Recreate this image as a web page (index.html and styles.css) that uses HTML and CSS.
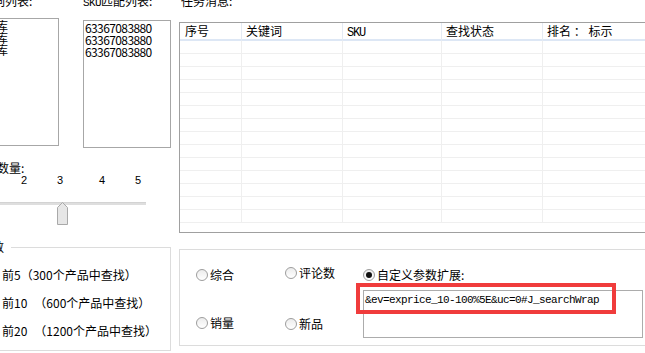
FILE: index.html
```html
<!DOCTYPE html>
<html lang="zh-CN">
<head>
<meta charset="utf-8">
<title>任务消息</title>
<link rel="stylesheet" href="styles.css">
</head>
<body>
<div class="app">
  <div class="left">
    <div class="lists">
      <div class="list-col">
        <div class="title">关键词列表:</div>
        <div class="listbox listbox-kw">
          <div class="item">数据库</div>
          <div class="item">数据库</div>
          <div class="item">数据库</div>
        </div>
      </div>
      <div class="list-col">
        <div class="title"><span class="lat">SKU</span>匹配列表:</div>
        <div class="listbox listbox-sku">
          <div class="item num">63367083880</div>
          <div class="item num">63367083880</div>
          <div class="item num">63367083880</div>
        </div>
      </div>
    </div>
    <div class="count-label">搜索数量:</div>
    <div class="ticks"><span>1</span><span>2</span><span>3</span><span>4</span><span>5</span></div>
    <div class="slider">
      <div class="track"></div>
      <svg class="thumb" width="12" height="23" viewBox="0 0 12 23"><path d="M0.5 22.5 V5.5 L5.5 0.5 L10.5 5.5 V22.5 Z" fill="#e6e6e6" stroke="#a9a9a9"/></svg>
    </div>
    <fieldset class="pages">
      <legend>搜索页数</legend>
      <div class="prow"><span class="radio"></span><span>前5（300个产品中查找）</span></div>
      <div class="prow"><span class="radio"></span><span>前10<span class="sp"></span>（600个产品中查找）</span></div>
      <div class="prow"><span class="radio"></span><span>前20<span class="sp"></span>（1200个产品中查找）</span></div>
    </fieldset>
  </div>
  <div class="right">
    <div class="title task-title">任务消息:</div>
    <div class="table">
      <div class="thead">
        <div class="th">序号</div>
        <div class="th">关键词</div>
        <div class="th"><span class="lat lat-h">SKU</span></div>
        <div class="th">查找状态</div>
        <div class="th">排名 ： 标示</div>
      </div>
      <div class="tbody">
        <div class="tr"><div class="td"></div><div class="td"></div><div class="td"></div><div class="td"></div><div class="td"></div></div>
        <div class="tr"><div class="td"></div><div class="td"></div><div class="td"></div><div class="td"></div><div class="td"></div></div>
        <div class="tr"><div class="td"></div><div class="td"></div><div class="td"></div><div class="td"></div><div class="td"></div></div>
        <div class="tr"><div class="td"></div><div class="td"></div><div class="td"></div><div class="td"></div><div class="td"></div></div>
        <div class="tr"><div class="td"></div><div class="td"></div><div class="td"></div><div class="td"></div><div class="td"></div></div>
        <div class="tr"><div class="td"></div><div class="td"></div><div class="td"></div><div class="td"></div><div class="td"></div></div>
        <div class="tr"><div class="td"></div><div class="td"></div><div class="td"></div><div class="td"></div><div class="td"></div></div>
        <div class="tr"><div class="td"></div><div class="td"></div><div class="td"></div><div class="td"></div><div class="td"></div></div>
        <div class="tr"><div class="td"></div><div class="td"></div><div class="td"></div><div class="td"></div><div class="td"></div></div>
        <div class="tr"><div class="td"></div><div class="td"></div><div class="td"></div><div class="td"></div><div class="td"></div></div>
        <div class="tr"><div class="td"></div><div class="td"></div><div class="td"></div><div class="td"></div><div class="td"></div></div>
        <div class="tr"><div class="td"></div><div class="td"></div><div class="td"></div><div class="td"></div><div class="td"></div></div>
        <div class="tr"><div class="td"></div><div class="td"></div><div class="td"></div><div class="td"></div><div class="td"></div></div>
        <div class="tr"><div class="td"></div><div class="td"></div><div class="td"></div><div class="td"></div><div class="td"></div></div>
      </div>
    </div>
    <div class="options">
      <div class="ocol ocol-1">
        <div class="opt"><span class="radio"></span><span>综合</span></div>
        <div class="opt opt-low1"><span class="radio"></span><span>销量</span></div>
      </div>
      <div class="ocol ocol-2">
        <div class="opt opt-up"><span class="radio"></span><span>评论数</span></div>
        <div class="opt opt-low2"><span class="radio"></span><span>新品</span></div>
      </div>
      <div class="ocol ocol-3">
        <div class="opt"><span class="radio on"></span><span>自定义参数扩展:</span></div>
        <div class="param-wrap">
          <div class="param">&amp;ev=exprice_10-100%5E&amp;uc=0#J_searchWrap</div>
          <div class="highlight"></div>
        </div>
      </div>
    </div>
  </div>
</div>
</body>
</html>
```
FILE: styles.css
```css
* { box-sizing: border-box; }
html, body { margin: 0; padding: 0; }
body {
  width: 645px;
  height: 353px;
  overflow: hidden;
  background: #fff;
  color: #000;
  font-family: "Noto Sans CJK SC", "Noto Sans", sans-serif;
  font-size: 12px;
  line-height: 14px;
}
.app {
  display: flex;
  align-items: flex-start;
  margin-left: -31px;
  width: 720px;
}
.left { width: 202px; flex: none; }
.right { width: 480px; flex: none; margin-left: 8px; }

.title { margin-top: -6px; line-height: 14px; white-space: nowrap; }
.task-title { margin-left: 2px; }
.lat {
  font-family: "Liberation Mono", monospace;
  font-size: 11px;
  letter-spacing: -0.6px;
}
.lat-h {
  font-size: 12px;
  letter-spacing: -1.2px;
}

.lists { display: flex; gap: 24px; }
.list-col { display: flex; flex-direction: column; }
.listbox {
  margin-top: 10px;
  height: 128px;
  border: 1px solid #a7a7a7;
  padding: 1px 1px 0;
  line-height: 12px;
  overflow: hidden;
  white-space: nowrap;
}
.listbox-kw { width: 90px; padding-left: 2px; }
.listbox-sku { width: 88px; }
.num { letter-spacing: -0.6px; }

.count-label { margin-top: 13px; margin-left: 4px; }
.ticks {
  display: grid;
  grid-template-columns: 36px 36px 42px 36px 6px;
  padding-left: 16px;
  font-family: "Liberation Sans", sans-serif;
  font-size: 11px;
  line-height: 11px;
}
.slider { position: relative; margin-top: 16px; height: 22px; }
.track { margin-top: 10px; width: 177px; height: 3px; background: #dedede; border-top: 1px solid #d3d3d3; }
.thumb { position: absolute; left: 88px; top: 0; display: block; }

.pages {
  margin: 16px 0 0 -21px;
  width: 223px;
  height: 111px;
  border: 1px solid #dcdcdc;
  padding: 0 0 0 7px;
  min-width: 0;
}
.pages legend { padding: 0 7px 0 0; line-height: 14px; }
.prow {
  display: flex;
  align-items: center;
  gap: 4px;
  height: 14px;
  margin: 14px 0 0 30px;
  white-space: nowrap;
}
.sp { display: inline-block; width: 7px; }

.radio {
  flex: none;
  position: relative;
  width: 12px;
  height: 12px;
  border: 1px solid #9d9d9d;
  border-radius: 50%;
  background: linear-gradient(#ececec, #ffffff);
}
.radio.on::after {
  content: "";
  position: absolute;
  left: 2px;
  top: 2px;
  width: 6px;
  height: 6px;
  border-radius: 50%;
  background: #111;
}

.table {
  margin-top: 14px;
  height: 211px;
  border: 1px solid #a0a0a0;
  overflow: hidden;
}
.thead, .tr {
  display: grid;
  grid-template-columns: 62px 101px 99px 101px 1fr;
}
.thead { height: 18px; border-bottom: 2px solid #dde7f5; }
.th {
  border-right: 1px solid #e4eaf3;
  padding-left: 4px;
  line-height: 16px;
  white-space: nowrap;
}
.th:first-child { padding-left: 5px; }
.th:last-child { border-right: none; }
.tr { height: 13px; border-bottom: 1px solid #efefef; }
.td { border-right: 1px solid #efefef; }
.td:last-child { border-right: none; }

.options {
  margin-top: 16px;
  height: 97px;
  border: 1px solid #dcdcdc;
  padding: 18px 0 0 16px;
  display: flex;
}
.ocol { display: flex; flex-direction: column; }
.ocol-1 { width: 89px; }
.ocol-2 { width: 78px; }
.opt {
  display: flex;
  align-items: center;
  gap: 2px;
  height: 14px;
  white-space: nowrap;
}
.opt-up { margin-top: -2px; }
.opt-low1 { margin-top: 34px; }
.opt-low2 { margin-top: 37px; }
.param-wrap { position: relative; margin-top: 8px; }
.param {
  width: 280px;
  height: 48px;
  border: 1px solid #acacac;
  padding: 2px 0 0 1px;
  font-family: "Liberation Mono", monospace;
  font-size: 11px;
  letter-spacing: -0.6px;
  line-height: 14px;
  white-space: nowrap;
}
.highlight {
  position: absolute;
  left: -7px;
  top: -7px;
  width: 260px;
  height: 31px;
  border: 4px solid #f03c3c;
}
```
